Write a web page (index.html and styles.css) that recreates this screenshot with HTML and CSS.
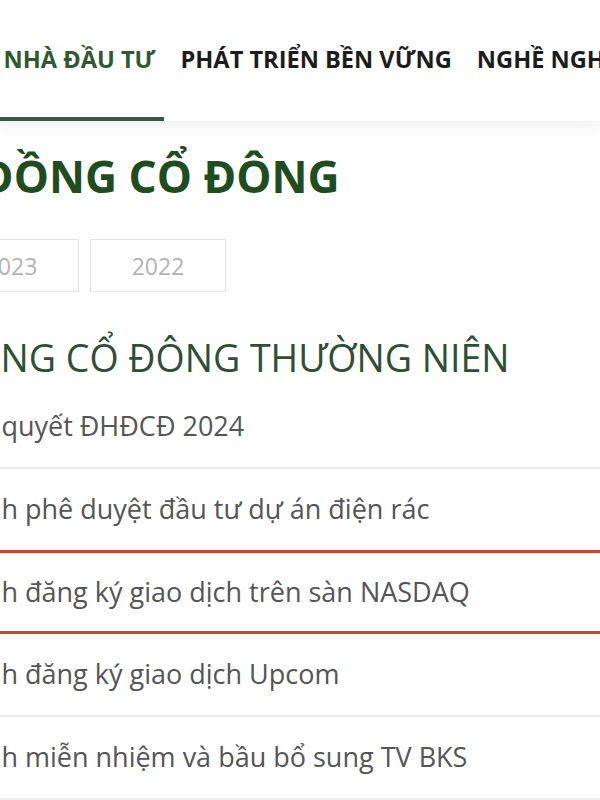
FILE: index.html
```html
<!DOCTYPE html>
<html lang="vi">
<head>
    <meta charset="UTF-8">
    <meta name="viewport" content="width=device-width, initial-scale=1.0">
    <title>Đại hội đồng cổ đông</title>
    <link rel="stylesheet" href="styles.css">
</head>
<body>

<header class="site-header">
    <nav class="main-nav">
        <a class="nav-link active" href="#">QUAN HỆ NHÀ ĐẦU TƯ</a>
        <a class="nav-link" href="#">PHÁT TRIỂN BỀN VỮNG</a>
        <a class="nav-link" href="#">NGHỀ NGHIỆP</a>
    </nav>
</header>

<main class="container">
    <h1 class="page-title">ĐẠI HỘI ĐỒNG CỔ ĐÔNG</h1>

    <div class="year-tabs">
        <a class="year-tab" href="#">2024</a>
        <a class="year-tab" href="#">2023</a>
        <a class="year-tab" href="#">2022</a>
    </div>

    <h2 class="section-title">ĐẠI HỘI ĐỒNG CỔ ĐÔNG THƯỜNG NIÊN</h2>

    <ul class="doc-list">
        <li class="doc-item doc-item--main"><a href="#">Nghị quyết ĐHĐCĐ 2024</a></li>
        <li class="doc-item"><a href="#">Tờ trình phê duyệt đầu tư dự án điện rác</a></li>
        <li class="doc-item active"><a href="#">Tờ trình đăng ký giao dịch trên sàn NASDAQ</a></li>
        <li class="doc-item"><a href="#">Tờ trình đăng ký giao dịch Upcom</a></li>
        <li class="doc-item"><a href="#">Tờ trình miễn nhiệm và bầu bổ sung TV BKS</a></li>
    </ul>
</main>

</body>
</html>
```

FILE: styles.css
```css
* {
    margin: 0;
    padding: 0;
    box-sizing: border-box;
}

html, body {
    overflow: hidden;
}

body {
    font-family: 'Open Sans', 'Noto Sans', sans-serif;
    background-color: #ffffff;
    color: #555;
    width: 600px;
}

a {
    color: inherit;
    text-decoration: none;
}

/* header / nav */
.site-header {
    height: 121px;
    background-color: #ffffff;
    box-shadow: 0 6px 14px rgba(0, 0, 0, 0.06);
    position: relative;
    z-index: 2;
}

.main-nav {
    display: flex;
    height: 100%;
    margin-left: -120px;
    white-space: nowrap;
}

.nav-link {
    display: flex;
    align-items: center;
    padding: 0 9px 0 8px;
    margin-right: 8px;
    font-size: 23.6px;
    font-weight: 700;
    color: #1c1c1c;
    border-bottom: 4px solid transparent;
}

.nav-link.active {
    color: #2e5a2e;
    border-bottom-color: #3a5a3c;
}

/* content */
.container {
    margin-left: -204px;
    white-space: nowrap;
}

.page-title {
    margin-top: 30px;
    font-size: 44.3px;
    line-height: 50px;
    font-weight: 700;
    color: #1e4d1e;
}

.year-tabs {
    display: flex;
    gap: 11px;
    margin-top: 38px;
}

.year-tab {
    width: 136px;
    height: 53px;
    border: 1px solid #e6e6e6;
    display: flex;
    align-items: center;
    justify-content: center;
    font-size: 23px;
    color: #b3b3b3;
}

.section-title {
    margin-top: 44px;
    font-size: 37.5px;
    line-height: 44px;
    font-weight: 400;
    color: #2e4f34;
}

.doc-list {
    list-style: none;
    margin-top: 6px;
}

.doc-item {
    padding: 21px 0 23px 123px;
    font-size: 27px;
    line-height: 37px;
    color: #555;
    border-bottom: 2px solid #ececec;
}

.doc-item--main {
    padding-left: 140px;
}

.doc-item.active {
    margin-top: -2px;
    padding-top: 20px;
    padding-bottom: 21px;
    border-top: 3px solid #c9452f;
    border-bottom: 3px solid #c9452f;
}
```
